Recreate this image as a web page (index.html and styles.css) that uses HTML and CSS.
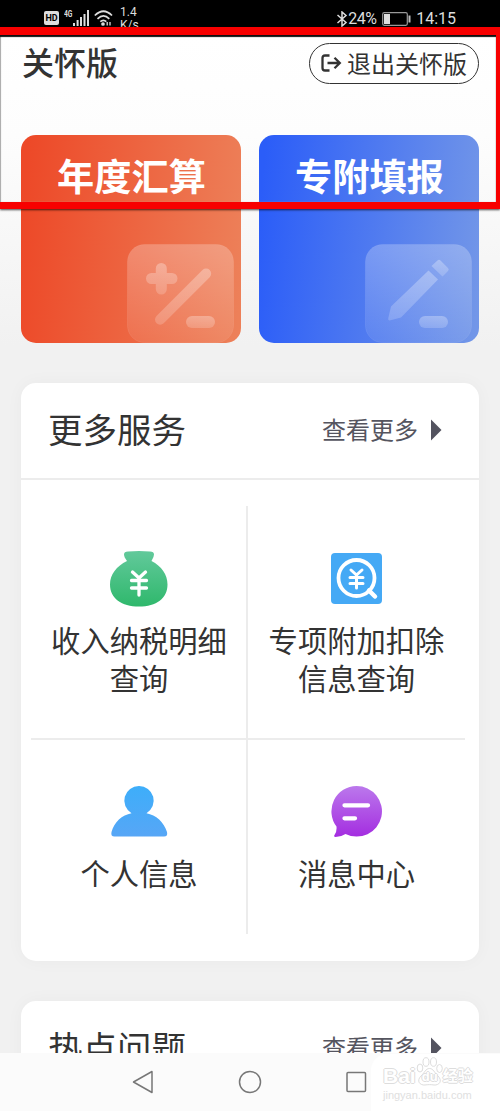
FILE: index.html
```html
<!DOCTYPE html>
<html lang="zh-CN">
<head>
<meta charset="utf-8">
<title>关怀版</title>
<link rel="stylesheet" href="styles.css">
</head>
<body>
<div class="phone">
  <header class="status">
    <div class="status-left">
      <span class="hd">HD</span>
      <span class="net">4G</span>
      <svg class="signal" width="17" height="16" viewBox="0 0 17 16" fill="#ddd"><path d="M0 13h2v3H0zM3.6 10h2v6h-2zM7 7h2v9H7zM10.500 4h2v12h-2zM14 0h2v16h-2z"/></svg>
      <svg class="wifi" width="19" height="16" viewBox="0 0 19 16" fill="none" stroke="#ddd" stroke-width="1.700"><path d="M.8 5.500Q9.500-3 18 5.500M3.500 8.800Q9.500 3 15.300 8.800M6.300 11.700Q9.500 9 12.300 11.700"/><circle cx="9" cy="14" r="1" fill="#ddd"/><path d="M13.200 12v3.500M16 12v3.500" stroke-width="1.300"/></svg>
      <span class="speed">1.4<br>K/s</span>
    </div>
    <div class="status-right">
      <svg width="12" height="16" viewBox="0 0 12 16" fill="none" stroke="#ddd" stroke-width="1.500"><path d="M1.500 4 10 11.500 6 15V1l4 3.500L1.500 12"/></svg>
      <span class="pct">24%</span>
      <svg class="battery" width="29" height="14" viewBox="0 0 29 14"><rect x=".7" y=".7" width="24.600" height="12.600" rx="1.500" fill="none" stroke="#999" stroke-width="1.200"/><path d="M2 2h6v10H2z" fill="#ddd"/><path d="M26.500 3.500h2v7h-2z" fill="#bbb"/></svg>
      <span class="time">14:15</span>
    </div>
  </header>

  <main class="content">
    <div class="topbar">
      <h1 class="title">关怀版</h1>
      <button class="exit">
        <svg width="21" height="18" viewBox="0 0 21 18" fill="none" stroke="#333" stroke-width="2.300"><path d="M8.500 1.500H4Q1.500 1.500 1.500 4v10Q1.500 16.500 4 16.500h4.500M6.500 9H19M13.500 3.700 18.800 9l-5.300 5.300"/></svg>
        <span>退出关怀版</span>
      </button>
    </div>

    <div class="cards">
      <section class="card card-red">
        <h2 class="card-title">年度汇算</h2>
        <svg class="card-art" width="107" height="99" viewBox="0 0 107 99">
          <defs><linearGradient id="glass" x1="0" y1="0" x2="0" y2="1"><stop stop-color="#fff" stop-opacity=".25"/><stop offset="1" stop-color="#fff" stop-opacity=".07"/></linearGradient>
          <linearGradient id="ink" x1="0" y1="0" x2="0" y2="1"><stop stop-color="#fff" stop-opacity=".3"/><stop offset="1" stop-color="#fff" stop-opacity=".18"/></linearGradient></defs>
          <rect x=".5" y=".5" width="106" height="98" rx="17" fill="url(#glass)" stroke="#fff" stroke-opacity=".08"/>
          <g fill="url(#ink)"><path d="M28.800 24.500a5.500 5.500 0 0 1 11 0V29H45a5.500 5.500 0 0 1 0 11h-5.200v5a5.500 5.500 0 0 1-11 0v-5h-4.300a5.500 5.500 0 0 1 0-11h4.300z"/><path d="m75.500 26-46 46a5 5 0 0 0 7.200 7.200l46-46A5 5 0 0 0 75.500 26z"/><rect x="59" y="72" width="29" height="12" rx="6"/></g>
        </svg>
      </section>
      <section class="card card-blue">
        <h2 class="card-title">专附填报</h2>
        <svg class="card-art" width="107" height="99" viewBox="0 0 107 99">
          <rect x=".5" y=".5" width="106" height="98" rx="17" fill="url(#glass)" stroke="#fff" stroke-opacity=".08"/>
          <g fill="url(#ink)"><path d="M72.500 16.500Q74 15 75.500 16.500L83 24q1.500 1.500 0 3l-5.500 5.500L66.500 22z"/><path d="m63.500 26.500 9.500 9L36 73.500l-10.500 2.800q-3 .8-2.200-2.300L26 62.500z"/><rect x="54" y="72" width="29" height="12" rx="6"/></g>
        </svg>
      </section>
    </div>

    <section class="panel services">
      <div class="panel-head">
        <h2 class="panel-title">更多服务</h2>
        <a class="more">查看更多<svg width="12" height="22" viewBox="0 0 12 22"><path d="M1 .5 11.500 11 1 21.500z" fill="#53535f"/></svg></a>
      </div>
      <div class="grid">
        <div class="cell">
          <svg width="60" height="58" viewBox="0 0 60 58"><defs><linearGradient id="green" x1="0" y1="0" x2="0" y2="1"><stop stop-color="#62c99b"/><stop offset="1" stop-color="#2fb86c"/></linearGradient></defs><path d="M19 1.500Q30 .5 41 1.500q4 0 4 3 0 2.500-2.500 6.500c10 5 16 13.500 16 23.500 0 14-11 22-28.500 22s-29-8-29-22c0-10 6.500-18.500 17-23.500Q15 7 15 4.500q0-3 4-3z" fill="url(#green)"/><path d="m23.500 22 6.500 6 6.500-6M22.500 30.500h15M22.500 38h15M30 28v17" fill="none" stroke="#fff" stroke-width="3.300" stroke-linecap="round"/></svg>
          <span class="label">收入纳税明细<br>查询</span>
        </div>
        <div class="cell">
          <svg width="60" height="58" viewBox="0 0 60 58"><rect x="4" y="3" width="51" height="51" rx="4" fill="#45a9f5"/><circle cx="29.500" cy="28" r="18" fill="none" stroke="#fff" stroke-width="3.800"/><path d="m42 40.500 6 6" stroke="#fff" stroke-width="4.500" stroke-linecap="round"/><path d="m24 20 5.500 5 5.500-5M23 27.500h13M23 33.500h13M29.500 25.500V38" fill="none" stroke="#fff" stroke-width="3" stroke-linecap="round"/></svg>
          <span class="label">专项附加扣除<br>信息查询</span>
        </div>
        <div class="cell">
          <svg width="60" height="58" viewBox="0 0 60 58"><defs><linearGradient id="sky" x1="0" y1="0" x2="0" y2="1"><stop stop-color="#3daefa"/><stop offset="1" stop-color="#57a6f6"/></linearGradient></defs><path d="M30 3a14.600 14.600 0 0 1 7.500 27.200C47 32 55 39 58 49q1 4.500-3 4.500H5.500q-4 0-3-4.500C5 39 13 32 22.500 30.200A14.600 14.600 0 0 1 30 3z" fill="url(#sky)"/></svg>
          <span class="label">个人信息</span>
        </div>
        <div class="cell">
          <svg width="60" height="58" viewBox="0 0 60 58"><defs><linearGradient id="violet" x1="0" y1="0" x2="0" y2="1"><stop stop-color="#bb78ec"/><stop offset="1" stop-color="#a42de0"/></linearGradient></defs><path d="M29.500 3a25.300 25.300 0 1 1-11 48q-4.500 3-10 3-2 0-1-2 2.500-3 2-8.500A25.300 25.300 0 0 1 29.500 3z" fill="url(#violet)"/><path d="M17.500 22.300H41M17.500 35.300H28" stroke="#fff" stroke-width="4.300" stroke-linecap="round"/></svg>
          <span class="label">消息中心</span>
        </div>
      </div>
    </section>

    <section class="panel">
      <div class="panel-head">
        <h2 class="panel-title">热点问题</h2>
        <a class="more">查看更多<svg width="12" height="22" viewBox="0 0 12 22"><path d="M1 .5 11.500 11 1 21.500z" fill="#53535f"/></svg></a>
      </div>
    </section>
  </main>

  <nav class="nav">
    <svg width="22" height="24" viewBox="0 0 22 24"><path d="M1.500 12 20 1.500v21z"/></svg>
    <svg width="24" height="24" viewBox="0 0 24 24"><circle cx="12" cy="12" r="10.500"/></svg>
    <svg width="22" height="24" viewBox="0 0 22 24"><rect x="2" y="2.500" width="18.500" height="19" rx="1"/></svg>
  </nav>

  <div class="watermark">
    <div class="wm-brand"><span>Bai</span><span class="paw"><svg width="27" height="29" viewBox="0 0 27 29"><g fill="#fff" stroke="#ddd"><ellipse cx="4" cy="11" rx="2.800" ry="4"/><ellipse cx="10" cy="5" rx="3" ry="4.300"/><ellipse cx="17.500" cy="5" rx="3" ry="4.300"/><ellipse cx="23.500" cy="11.500" rx="2.800" ry="4"/><path d="M13.500 11.500c4 0 5 4.500 8.500 7.500 5 5 1 9.500-4 9-3-.5-6-.5-9 0-5 .5-9-4-4-9 3.500-3 4.500-7.500 8.500-7.500z"/></g></svg><b>du</b></span><span class="wm-cn">经验</span></div>
    <div class="wm-url">jingyan.baidu.com</div>
  </div>
  <div class="marker"></div>
</div>
</body>
</html>
```
FILE: styles.css
```css
* { box-sizing: border-box; }
body { margin: 0; font-family: "Noto Sans CJK SC", sans-serif; color: #333; }
h1, h2 { margin: 0; }
svg { display: block; flex: none; }
.phone { position: relative; width: 500px; height: 1111px; display: flex; flex-direction: column; overflow: hidden; background: #f1f1f1; }

.status { flex: none; height: 36px; padding: 0 44px; background: #000; color: #ddd; display: flex; justify-content: space-between; font-family: Roboto, sans-serif; }
.status-left, .status-right { display: flex; align-items: flex-start; }
.hd { width: 15px; height: 14px; margin-top: 11px; border-radius: 2px; background: #ddd; color: #000; font-size: 9px; line-height: 14px; font-weight: 700; text-align: center; }
.net { margin: 9px 0 0 5px; width: 9px; font-size: 9px; line-height: 10px; font-weight: 700; transform: scaleX(.75); transform-origin: left; }
.signal { margin-top: 10px; }
.wifi { margin: 10px 0 0 4px; }
.speed { margin: 6px 0 0 7px; font-size: 12px; line-height: 13px; }
.status-right { padding-top: 10px; }
.pct { width: 33px; font-size: 16px; line-height: 18px; letter-spacing: -.4px; }
.battery { margin: 2px 5px 0 1px; }
.time { font-size: 16px; line-height: 18px; }
.status-right > svg:first-child { margin-top: 1px; }

.content { flex: 1; min-height: 0; overflow: hidden; padding: 0 21px; background: linear-gradient(#fff 0, #fdfdfd 100px, #f1f1f1 310px); }
.topbar { height: 99px; padding: 5px 0 0 1px; display: flex; justify-content: space-between; align-items: flex-start; }
.title { font-size: 32px; line-height: 40px; font-weight: 500; }
.exit { width: 170px; height: 41px; margin-top: 2px; padding: 0 0 2px 11px; border: 1.500px solid #333; border-radius: 21px; background: #fff; color: #333; display: flex; align-items: center; gap: 5px; font: 24px/36px "Noto Sans CJK SC", sans-serif; white-space: nowrap; }

.cards { display: grid; grid-template-columns: 220px 220px; gap: 18px; }
.card { height: 208px; border-radius: 15px; overflow: hidden; display: flex; flex-direction: column; justify-content: space-between; color: #fff; }
.card-red { background: linear-gradient(95deg, #ed4928 3%, #ed8059 98%); }
.card-blue { background: linear-gradient(95deg, #2b5df8 3%, #7296e8 98%); }
.card-title { padding: 15px 0 0 1px; font-size: 37.200px; line-height: 50px; font-weight: 700; text-align: center; }
.card-art { align-self: flex-end; margin-right: 7.500px; }

.panel { margin-top: 40px; border-radius: 15px; background: #fff; box-shadow: 0 0 18px rgba(0, 0, 0, .035); }
.panel-head { height: 97px; padding: 0 37px 4px 27px; border-bottom: 2px solid #ececec; display: flex; align-items: center; justify-content: space-between; }
.panel-title { margin-top: -2px; font-size: 34.500px; line-height: 50px; font-weight: 400; }
.more { display: flex; align-items: center; gap: 12px; font-size: 24px; line-height: 36px; color: #55555f; }
.more svg { margin-top: 3px; }
.services { height: 578px; }
.grid { height: 428px; margin: 26px 14px 0 10px; display: grid; grid-template-columns: 217px 217px; grid-template-rows: 234px 194px; }
.cell { padding-top: 44px; display: flex; flex-direction: column; align-items: center; }
.cell:nth-child(odd) { padding-left: 1px; border-right: 2px solid #ececec; }
.cell:nth-child(-n+2) { border-bottom: 2px solid #ececec; }
.cell:nth-child(n+3) { padding-top: 43px; }
.label { margin-top: 13px; font-size: 29.300px; line-height: 37.500px; text-align: center; white-space: nowrap; }

.nav { flex: none; height: 58px; padding: 0 133px 0 132px; background: #fbfbfb; display: flex; align-items: center; justify-content: space-between; }
.nav svg { fill: none; stroke: #777; stroke-width: 1.500; stroke-linejoin: round; }

.watermark { position: absolute; left: 371px; top: 1054px; width: 129px; height: 57px; padding-left: 12px; background: #fff; color: #fff; border-top-left-radius: 16px; }
.wm-brand { height: 35px; display: flex; align-items: flex-end; font: 700 21px/27px "Liberation Sans", sans-serif; text-shadow: 1px 0 #ddd, -1px 0 #ddd, 0 1px #ddd, 0 -1px #ddd; }
.paw { position: relative; height: 32px; width: 27px; }
.paw b { position: absolute; left: 6px; top: 13px; font-size: 13px; line-height: 14px; }
.wm-cn { font: 700 15px/29px "Noto Sans CJK SC", sans-serif; }
.wm-url { font: 11px/12px "Liberation Sans", sans-serif; color: #e0e0e0; white-space: nowrap; }

.marker { position: absolute; left: 0; top: 27px; width: 500px; height: 182px; border: solid #f80000; border-width: 8px 4px 7px 0; box-shadow: inset 0 2px 1px #111, inset 1px 0 1px #bbb, 0 1px 2px rgba(0, 0, 0, .7); }
```
